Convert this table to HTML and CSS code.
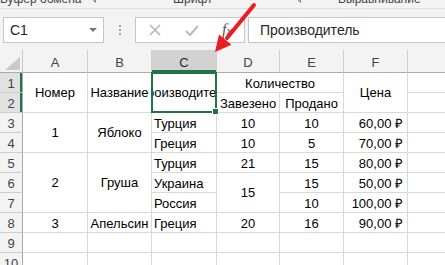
FILE: index.html
```html
<!DOCTYPE html>
<html lang="ru">
<head>
<meta charset="utf-8">
<title>Excel</title>
<link rel="stylesheet" href="styles.css">
</head>
<body>
<div class="ribbon">
  <div class="grp g1"><span class="rl">Буфер обмена</span></div>
  <div class="grp g2"><svg class="launch" width="8" height="8" viewBox="0 0 8 8"><path d="M0.5 0.5H7.5V7.5" fill="none" stroke="#777" stroke-width="1"/><path d="M3 3L7 7" stroke="#777" stroke-width="1"/></svg></div>
  <div class="grp g3"><span class="rl">Шрифт</span></div>
  <div class="grp g4"><svg class="launch" width="8" height="8" viewBox="0 0 8 8"><path d="M0.5 0.5H7.5V7.5" fill="none" stroke="#777" stroke-width="1"/><path d="M3 3L7 7" stroke="#777" stroke-width="1"/></svg></div>
  <div class="grp"><span class="rl">Выравнивание</span></div>
</div>

<div class="fbar">
  <div class="namebox"><span>C1</span><span class="caret"></span></div>
  <div class="dots"><i></i><i></i><i></i></div>
  <div class="fbtns">
    <svg width="12" height="12" viewBox="0 0 12 12"><path d="M1 1L11 11M11 1L1 11" stroke="#b3b3b3" stroke-width="1.5"/></svg>
    <svg width="14" height="11" viewBox="0 0 14 11"><path d="M1 6L5 10L13 1" fill="none" stroke="#b8b8b8" stroke-width="2"/></svg>
    <span class="fx">f<span class="fxx">x</span></span>
  </div>
  <div class="finput">Производитель</div>
</div>

<div class="sheet">
  <div class="corner"><svg width="15" height="13" viewBox="0 0 15 13"><path d="M15 0V13H0Z" fill="#c9c9c9"/></svg></div>
  <div class="ch">A</div>
  <div class="ch">B</div>
  <div class="ch csel">C</div>
  <div class="ch">D</div>
  <div class="ch">E</div>
  <div class="ch">F</div>
  <div class="ch"></div>

  <div class="rh rsel">1</div>
  <div class="m span2">Номер</div>
  <div class="m span2">Название</div>
  <div class="m span2">Производитель</div>
  <div class="cspan2">Количество</div>
  <div class="m span2">Цена</div>
  <div></div>

  <div class="rh rsel">2</div>
  <div>Завезено</div>
  <div>Продано</div>
  <div></div>

  <div class="rh">3</div>
  <div class="m span2">1</div>
  <div class="m span2">Яблоко</div>
  <div class="l">Турция</div>
  <div>10</div>
  <div>10</div>
  <div class="r">60,00 ₽</div>
  <div></div>

  <div class="rh">4</div>
  <div class="l">Греция</div>
  <div>10</div>
  <div>5</div>
  <div class="r">70,00 ₽</div>
  <div></div>

  <div class="rh">5</div>
  <div class="m span3">2</div>
  <div class="m span3">Груша</div>
  <div class="l">Турция</div>
  <div>21</div>
  <div>15</div>
  <div class="r">80,00 ₽</div>
  <div></div>

  <div class="rh">6</div>
  <div class="l">Украина</div>
  <div class="m span2">15</div>
  <div>15</div>
  <div class="r">50,00 ₽</div>
  <div></div>

  <div class="rh">7</div>
  <div class="l">Россия</div>
  <div>10</div>
  <div class="r">100,00 ₽</div>
  <div></div>

  <div class="rh">8</div>
  <div>3</div>
  <div>Апельсин</div>
  <div class="l">Греция</div>
  <div>20</div>
  <div>16</div>
  <div class="r">90,00 ₽</div>
  <div></div>

  <div class="rh">9</div>
  <div></div><div></div><div></div><div></div><div></div><div></div><div></div>

  <div class="rh">10</div>
  <div></div><div></div><div></div><div></div><div></div><div></div><div></div>

  <span class="sel"><span class="handle"></span></span>
</div>

<svg class="arrow" width="445" height="265" viewBox="0 0 445 265">
  <line x1="254" y1="5" x2="227" y2="38" stroke="#ec1c24" stroke-width="4" stroke-linecap="round"/>
  <polygon points="215,52 231.5,44.8 219,34.6" fill="#ec1c24"/>
</svg>
</body>
</html>
```

FILE: styles.css
```css
html, body {
  margin: 0;
  padding: 0;
}

body {
  width: 445px;
  height: 265px;
  overflow: hidden;
  position: relative;
  background: #f3f3f3;
  font-family: "Liberation Sans", Arial, sans-serif;
}

/* ribbon group captions (cut off at top) */
.ribbon {
  height: 8px;
  border-bottom: 1px solid #e1e1e1;
  display: flex;
  overflow: hidden;
  font-size: 12px;
  line-height: 14px;
  color: #444;
}

.grp {
  flex: none;
  white-space: nowrap;
}

.g1 { width: 88px; }
.g2 { width: 85px; }
.g3 { width: 120px; }
.g4 { width: 45px; }

.rl {
  display: block;
  margin-top: -8px;
}

.launch {
  display: block;
  margin-top: -5px;
}

/* formula bar */
.fbar {
  height: 41px;
  box-sizing: border-box;
  padding-top: 8px;
  display: flex;
  align-items: flex-start;
}

.namebox {
  flex: none;
  margin-left: 3px;
  width: 101px;
  height: 26px;
  box-sizing: border-box;
  border: 1px solid #c6c6c6;
  background: #fff;
  display: flex;
  align-items: center;
  padding-left: 6px;
  font-size: 14px;
  color: #262626;
}

.caret {
  margin-left: auto;
  margin-right: 6px;
  width: 0;
  height: 0;
  border-left: 4px solid transparent;
  border-right: 4px solid transparent;
  border-top: 4px solid #777;
}

.dots {
  flex: none;
  width: 31px;
  height: 26px;
  display: flex;
  flex-direction: column;
  align-items: center;
  justify-content: center;
  gap: 2px;
}

.dots i {
  display: block;
  width: 2px;
  height: 2px;
  background: #a6a6a6;
}

.fbtns {
  flex: none;
  width: 110px;
  height: 26px;
  box-sizing: border-box;
  border: 1px solid #c6c6c6;
  background: #fff;
  display: grid;
  grid-template-columns: 37px 37px 1fr;
  align-items: center;
  justify-items: center;
}

.fx {
  font-family: "Liberation Serif", "Times New Roman", serif;
  font-style: italic;
  font-size: 16px;
  color: #555;
  line-height: 1;
}

.fxx {
  font-size: 12px;
}

.finput {
  flex: 1;
  margin-left: 3px;
  margin-right: -3px;
  height: 26px;
  box-sizing: border-box;
  border: 1px solid #c6c6c6;
  background: #fff;
  padding-left: 11px;
  display: flex;
  align-items: center;
  font-size: 14px;
  color: #262626;
}

/* worksheet */
.sheet {
  display: grid;
  grid-template-columns: 23px 65px 64px 65px 63px 64px 64px 60px;
  grid-template-rows: 23px repeat(10, 20px);
  background: #fff;
  position: relative;
  font-size: 13px;
  color: #000;
}

.sheet > div {
  box-sizing: border-box;
  border-right: 1px solid #d9d9d9;
  border-bottom: 1px solid #d9d9d9;
  display: flex;
  align-items: flex-end;
  justify-content: center;
  padding: 0 3px 1px;
  white-space: nowrap;
  overflow: hidden;
  min-width: 0;
  line-height: 15px;
}

.sheet > .corner {
  background: #f3f3f3;
  border-right-color: #c6c6c6;
  border-bottom-color: #ababab;
  justify-content: flex-end;
  padding: 0 2px 2px 0;
}

.sheet > .ch {
  background: #f3f3f3;
  border-right-color: #cdcdcd;
  border-bottom-color: #ababab;
  align-items: center;
  padding: 2px 0 0;
  color: #444;
}

.sheet > .csel {
  background: #d2d2d2;
  box-shadow: inset 0 -2px 0 #217346;
  color: #262626;
}

.sheet > .rh {
  background: #f3f3f3;
  border-right-color: #ababab;
  border-bottom-color: #cdcdcd;
  align-items: center;
  padding: 1px 0 0;
  color: #444;
}

.sheet > .rsel {
  background: #e1e1e1;
  box-shadow: inset -2px 0 0 #217346;
}

.sheet > .l {
  justify-content: flex-start;
  padding-left: 2px;
}

.sheet > .r {
  justify-content: flex-end;
  padding-right: 4px;
}

.sheet > .m {
  align-items: center;
  padding-bottom: 0;
}

.span2 { grid-row: span 2; }
.span3 { grid-row: span 3; }
.cspan2 { grid-column: span 2; }

.sel {
  position: absolute;
  grid-column: 4 / 5;
  grid-row: 2 / 4;
  top: -1px;
  left: -1px;
  right: 0;
  bottom: 0;
  border: 2px solid #217346;
  pointer-events: none;
}

.handle {
  position: absolute;
  right: -4px;
  bottom: -4px;
  width: 5px;
  height: 5px;
  background: #217346;
  border: 1px solid #fff;
}

.arrow {
  position: absolute;
  left: 0;
  top: 0;
  pointer-events: none;
}
```
